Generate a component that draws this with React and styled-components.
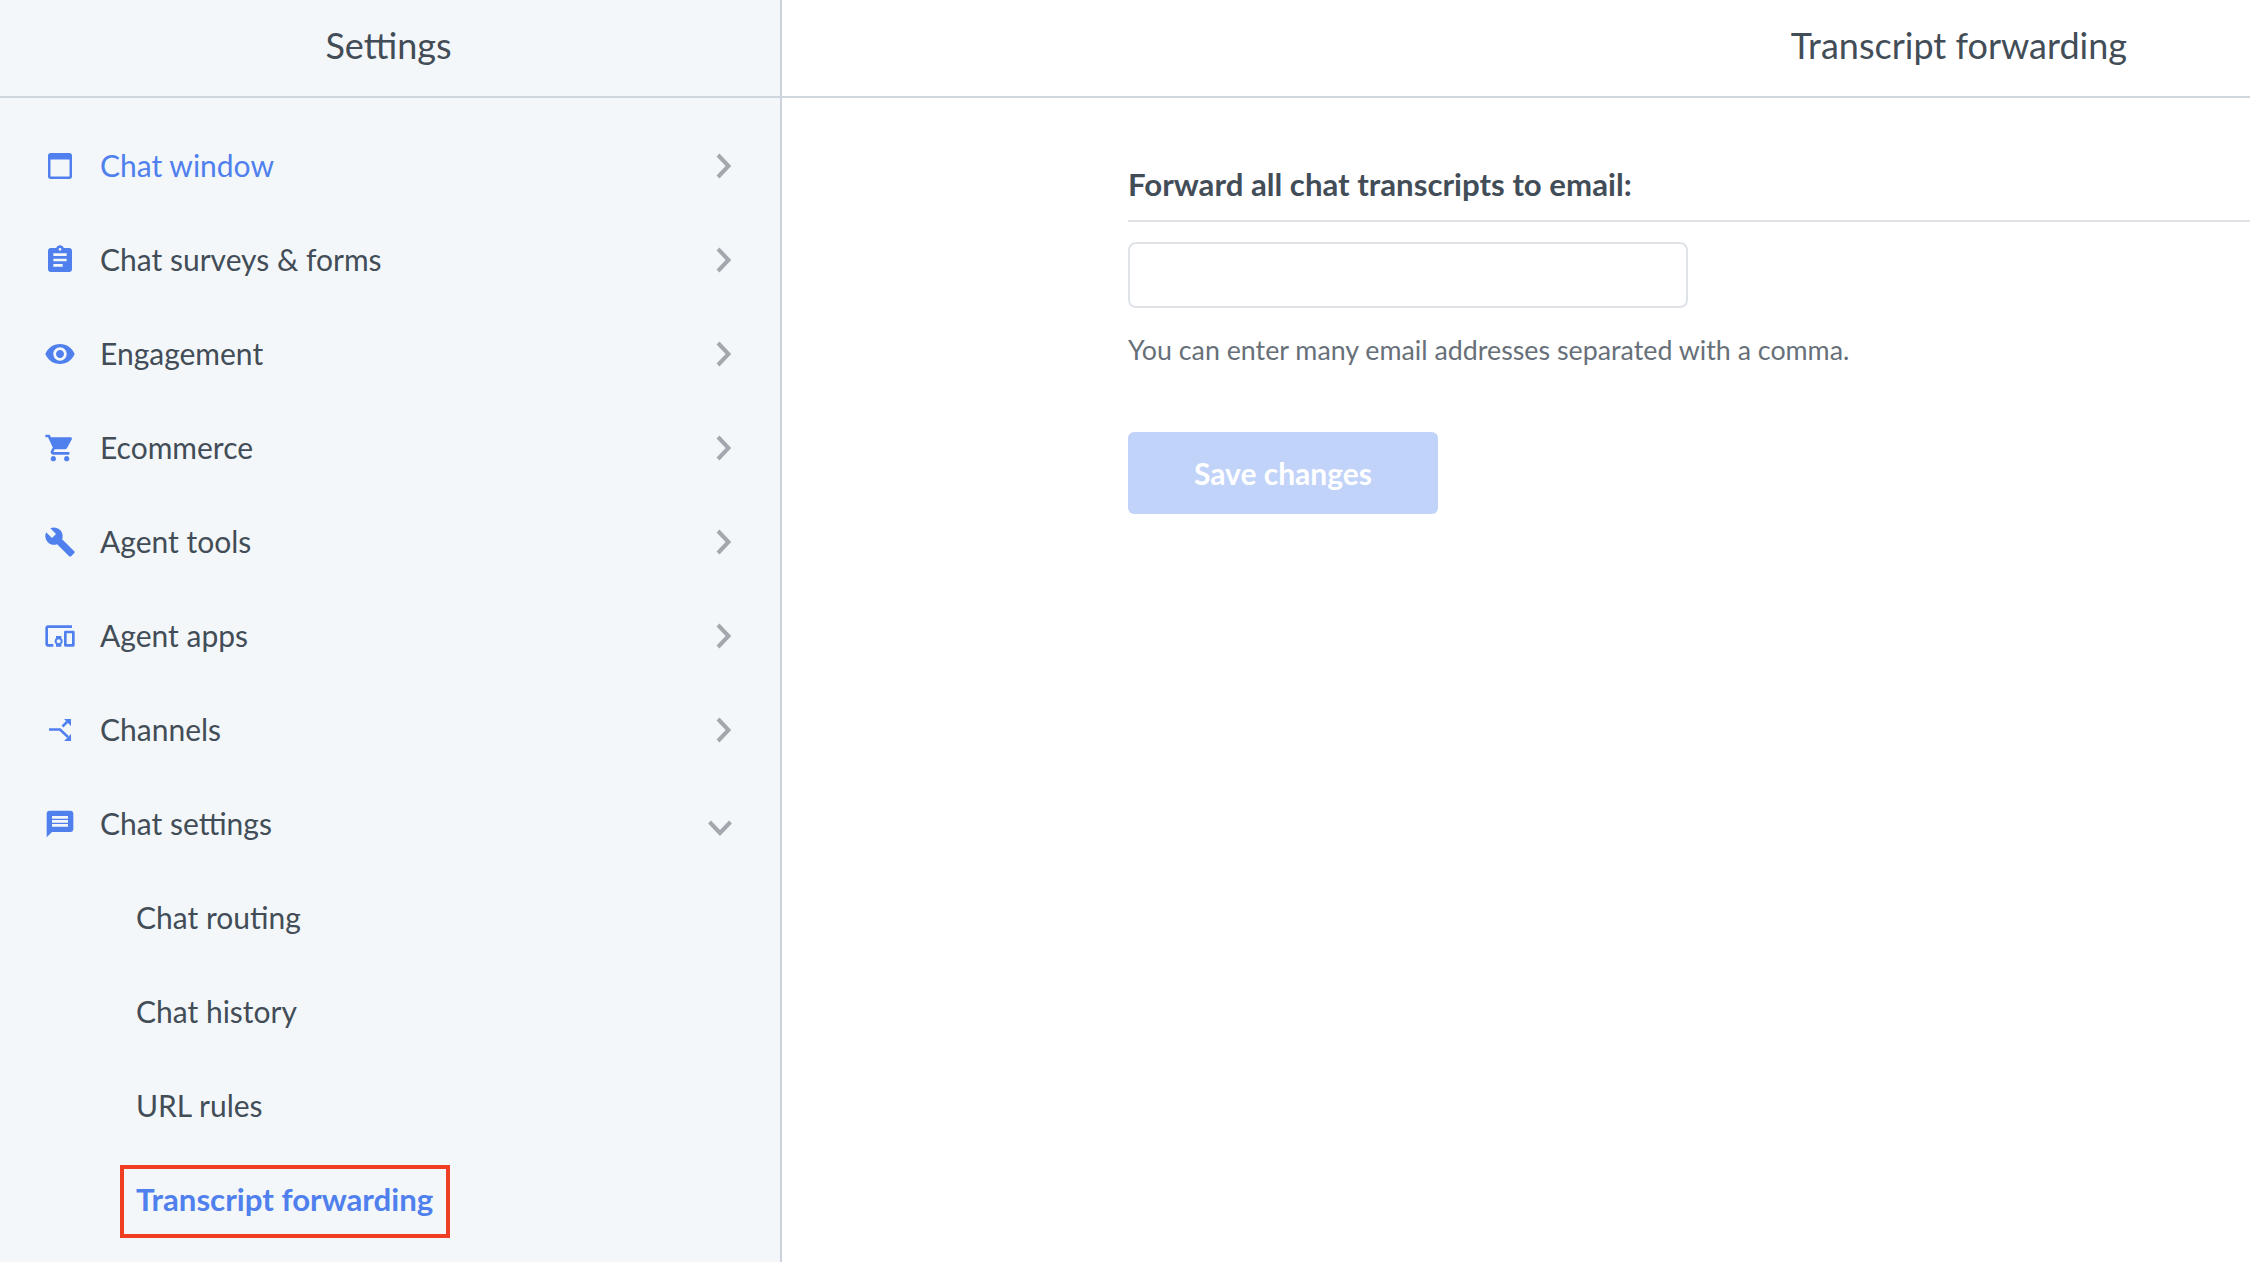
import React from "react";
import styled, { createGlobalStyle } from "styled-components";
import {
  MdAssignment,
  MdVisibility,
  MdShoppingCart,
  MdBuild,
  MdDevicesOther,
  MdMessage,
} from "react-icons/md";

const GlobalStyle = createGlobalStyle`
  html, body {
    margin: 0;
    padding: 0;
    background: #fff;
    overflow: hidden;
  }
  * { box-sizing: border-box; }
`;

const FONT = `"Lato", "Noto Sans", sans-serif`;

const Page = styled.div`
  display: flex;
  width: 2250px;
  height: 1262px;
  font-family: ${FONT};
  color: #424d57;
  overflow: hidden;
`;

const Sidebar = styled.aside`
  width: 782px;
  flex: none;
  background: #f4f7fa;
  border-right: 2px solid #ccd3dc;
`;

const Main = styled.main`
  flex: 1;
  min-width: 0;
`;

const Header = styled.header`
  height: 98px;
  display: flex;
  align-items: center;
  justify-content: ${(p) => p.$align || "center"};
  padding: ${(p) => p.$padding || "0"};
  border-bottom: 2px solid #d0d6de;
  font-size: 36px;
`;

const Menu = styled.ul`
  list-style: none;
  margin: 0;
  padding: 21px 0 0;
`;

const Row = styled.li`
  height: 94px;
  display: flex;
  align-items: center;
  padding: 0 48px 0 44px;
  font-size: 30px;
  color: ${(p) => (p.$active ? "#4f80ed" : "#424d57")};
`;

const SubRow = styled.li`
  height: 94px;
  display: flex;
  align-items: center;
  padding: 0 0 3px 136px;
  font-size: ${(p) => (p.$active ? "31.2px" : "30px")};
  font-weight: ${(p) => (p.$active ? 700 : 400)};
  color: ${(p) => (p.$active ? "#4f80ed" : "#424d57")};
`;

const IconSlot = styled.span`
  width: 32px;
  height: 32px;
  flex: none;
  margin-right: 24px;
  color: #4f80ed;
  display: flex;
  svg {
    width: 32px;
    height: 32px;
    display: block;
  }
`;

const Label = styled.span`
  flex: 1;
  padding-bottom: 3px;
`;

const ChevronRight = styled.svg`
  width: 18px;
  height: 26px;
  flex: none;
`;

const ChevronDown = styled.svg`
  width: 24px;
  height: 18px;
  flex: none;
  margin-top: 8px;
`;

const Highlight = styled.span`
  position: relative;
  &::after {
    content: "";
    position: absolute;
    inset: -15px -17px -20px -16px;
    border: 4px solid #f03e23;
  }
`;

const Form = styled.section`
  padding: 60px 0 0 346px;
`;

const FormTitle = styled.h2`
  margin: 0;
  height: 64px;
  font-size: 31.2px;
  font-weight: 700;
  line-height: 52px;
  border-bottom: 2px solid #dfe3e8;
`;

const EmailInput = styled.input`
  display: block;
  width: 560px;
  height: 66px;
  margin-top: 20px;
  border: 2px solid #dfe3e8;
  border-radius: 8px;
  background: #fff;
  outline: none;
`;

const Hint = styled.p`
  margin: 24px 0 0;
  font-size: 26.8px;
  line-height: 36px;
  color: #677079;
`;

const SaveButton = styled.button`
  display: block;
  width: 310px;
  height: 82px;
  margin-top: 64px;
  border: 0;
  border-radius: 6px;
  background: #c1d3f8;
  color: #fff;
  font-family: ${FONT};
  font-size: 30px;
  font-weight: 700;
`;

const WindowIcon = () => (
  <svg viewBox="0 0 32 32">
    <path
      fillRule="evenodd"
      fill="#4f80ed"
      d="M4 5.5C4 4.1 5.1 3 6.5 3h19C26.9 3 28 4.1 28 5.5v21c0 1.4-1.1 2.5-2.5 2.5h-19C5.1 29 4 27.9 4 26.5zM6.5 9.500v17h19v-17z"
    />
  </svg>
);

const ChannelsIcon = () => (
  <svg viewBox="0 0 32 32">
    <path
      d="M5 15.5h11l8 7.5M18.5 12.5l6-6"
      fill="none"
      stroke="#4f80ed"
      strokeWidth="2.6"
    />
    <path d="M27 5v7l-7-7zM27 27v-7l-7 7z" fill="#4f80ed" />
  </svg>
);

const RightChevron = () => (
  <ChevronRight viewBox="0 0 18 26" fill="none">
    <path d="M4 2l10.5 11L4 24" stroke="#a2a8ad" strokeWidth="4" />
  </ChevronRight>
);

const DownChevron = () => (
  <ChevronDown viewBox="0 0 24 18" fill="none">
    <path d="M1.5 3l10.5 11 10.5-11" stroke="#a2a8ad" strokeWidth="4" />
  </ChevronDown>
);

const items = [
  { label: "Chat window", icon: <WindowIcon />, active: true },
  { label: "Chat surveys & forms", icon: <MdAssignment /> },
  { label: "Engagement", icon: <MdVisibility /> },
  { label: "Ecommerce", icon: <MdShoppingCart /> },
  { label: "Agent tools", icon: <MdBuild /> },
  { label: "Agent apps", icon: <MdDevicesOther /> },
  { label: "Channels", icon: <ChannelsIcon /> },
];

const subItems = ["Chat routing", "Chat history", "URL rules"];

export default function App() {
  return (
    <Page>
      <GlobalStyle />
      <Sidebar>
        <Header $padding="0 3px 6px 0">Settings</Header>
        <Menu>
          {items.map((item) => (
            <Row key={item.label} $active={item.active}>
              <IconSlot>{item.icon}</IconSlot>
              <Label>{item.label}</Label>
              <RightChevron />
            </Row>
          ))}
          <Row>
            <IconSlot>
              <MdMessage />
            </IconSlot>
            <Label>Chat settings</Label>
            <DownChevron />
          </Row>
          {subItems.map((label) => (
            <SubRow key={label}>{label}</SubRow>
          ))}
          <SubRow $active>
            <Highlight>Transcript forwarding</Highlight>
          </SubRow>
        </Menu>
      </Sidebar>
      <Main>
        <Header $align="flex-end" $padding="0 123px 6px 0">
          Transcript forwarding
        </Header>
        <Form>
          <FormTitle>Forward all chat transcripts to email:</FormTitle>
          <EmailInput type="text" />
          <Hint>You can enter many email addresses separated with a comma.</Hint>
          <SaveButton disabled>Save changes</SaveButton>
        </Form>
      </Main>
    </Page>
  );
}
